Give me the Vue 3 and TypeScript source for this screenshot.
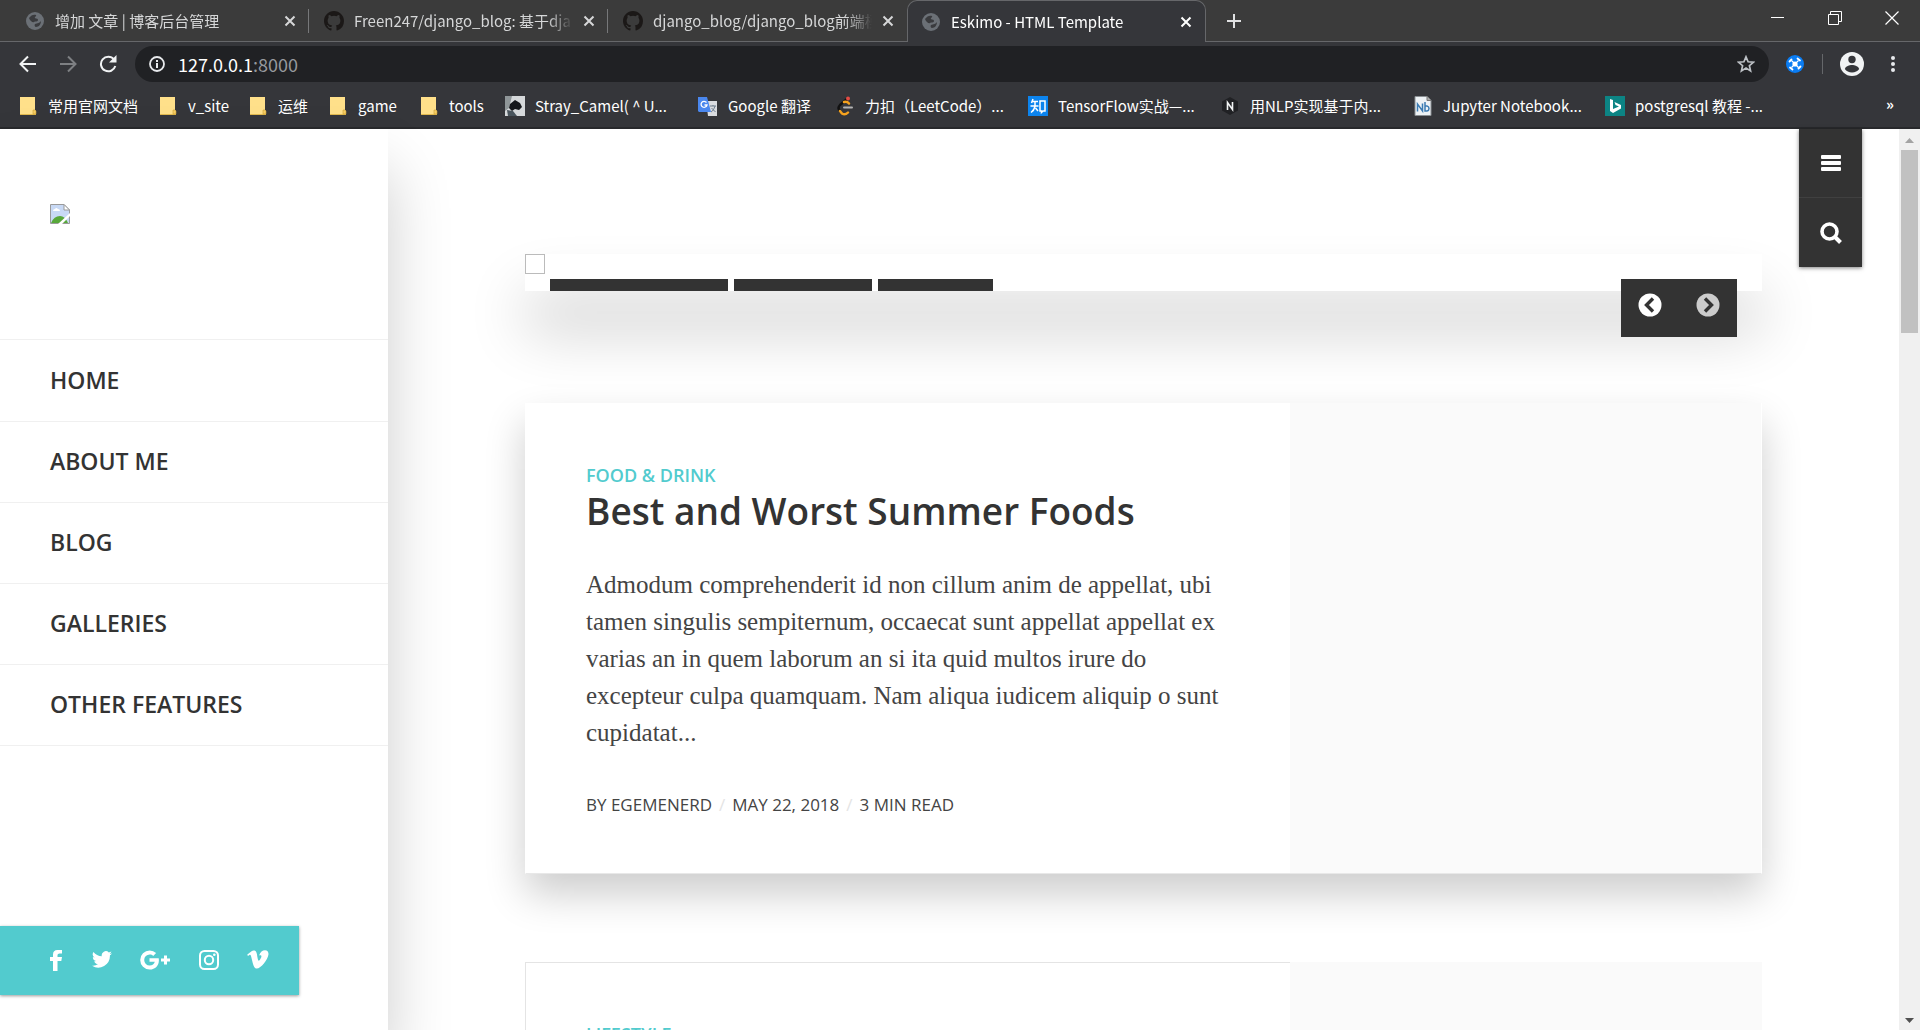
<script setup lang="ts">
interface Tab { title: string; icon: 'globe' | 'github'; active?: boolean }
interface Bookmark { label: string; icon: string; width: number }

const tabs: Tab[] = [
  { title: '增加 文章 | 博客后台管理', icon: 'globe' },
  { title: 'Freen247/django_blog: 基于dja', icon: 'github' },
  { title: 'django_blog/django_blog前端模', icon: 'github' },
  { title: 'Eskimo - HTML Template', icon: 'globe', active: true },
]

const bookmarks: Bookmark[] = [
  { label: '常用官网文档', icon: 'folder', width: 140 },
  { label: 'v_site', icon: 'folder', width: 90 },
  { label: '运维', icon: 'folder', width: 80 },
  { label: 'game', icon: 'folder', width: 91 },
  { label: 'tools', icon: 'folder', width: 86 },
  { label: 'Stray_Camel( ^ U...', icon: 'camel', width: 193 },
  { label: 'Google 翻译', icon: 'translate', width: 137 },
  { label: '力扣（LeetCode）...', icon: 'leetcode', width: 193 },
  { label: 'TensorFlow实战—...', icon: 'zhihu', width: 192 },
  { label: '用NLP实现基于内...', icon: 'hex', width: 193 },
  { label: 'Jupyter Notebook...', icon: 'notebook', width: 192 },
  { label: 'postgresql 教程 -...', icon: 'bing', width: 170 },
]

const menu = ['Home', 'About me', 'Blog', 'Galleries', 'Other features']
const slideTabs = [178, 138, 115]
const meta = ['By Egemenerd', 'May 22, 2018', '3 min read']
</script>

<template>
  <div class="window">
    <header class="chrome">
      <div class="tabstrip">
        <div v-for="(tab, i) in tabs" :key="i" class="tab" :class="{ active: tab.active, divided: i < 2 }">
          <svg v-if="tab.icon === 'globe'" class="favicon" viewBox="0 0 20 20" aria-hidden="true">
            <circle cx="10" cy="10" r="9" fill="#6b7076" />
            <path d="M4 7c2-3 5-4 7-3 1 1-2 2-1 3s3 0 3 2-3 1-4 2-4-1-5-4zM10 13c2-1 5-1 6-3 0 3-2 6-5 6-1 0-2-2-1-3z" fill="#3a3b3e" />
          </svg>
          <svg v-else class="favicon" viewBox="0 0 16 16" aria-hidden="true">
            <path fill="#1b1817" d="M8 0C3.58 0 0 3.58 0 8c0 3.54 2.29 6.53 5.47 7.59.4.07.55-.17.55-.38 0-.19-.01-.82-.01-1.49-2.01.37-2.53-.49-2.69-.94-.09-.23-.48-.94-.82-1.13-.28-.15-.68-.52-.01-.53.63-.01 1.08.58 1.23.82.72 1.21 1.87.87 2.33.66.07-.52.28-.87.51-1.07-1.78-.2-3.64-.89-3.64-3.95 0-.87.31-1.59.82-2.15-.08-.2-.36-1.02.08-2.12 0 0 .67-.21 2.2.82a7.6 7.6 0 0 1 4 0c1.53-1.04 2.2-.82 2.2-.82.44 1.1.16 1.92.08 2.12.51.56.82 1.27.82 2.15 0 3.07-1.87 3.75-3.65 3.95.29.25.54.73.54 1.48 0 1.07-.01 1.93-.01 2.2 0 .21.15.46.55.38A8 8 0 0 0 16 8c0-4.42-3.58-8-8-8z" />
          </svg>
          <span class="tab-title">{{ tab.title }}</span>
          <button class="tab-close" aria-label="Close tab">
            <svg viewBox="0 0 12 12" width="12" height="12"><path d="M1.500 1.500l9 9M10.500 1.500l-9 9" stroke="currentColor" stroke-width="2" /></svg>
          </button>
        </div>
        <button class="new-tab" aria-label="New tab">
          <svg viewBox="0 0 16 16" width="16" height="16"><path d="M8 1v14M1 8h14" stroke="currentColor" stroke-width="2" /></svg>
        </button>
        <div class="controls">
          <button aria-label="Minimize"><svg viewBox="0 0 14 14" width="14" height="14"><path d="M0 6.500h13" stroke="#fff" /></svg></button>
          <button aria-label="Restore"><svg viewBox="0 0 14 14" width="14" height="14" fill="none" stroke="#fff"><path d="M.5 3.500h10v10H.5zM2.500 3.500v-3h11v10h-3" /></svg></button>
          <button aria-label="Close"><svg viewBox="0 0 14 14" width="14" height="14"><path d="M.5.5l13 13M13.500.5l-13 13" stroke="#fff" stroke-width="1.200" /></svg></button>
        </div>
      </div>

      <div class="toolbar">
        <button class="tool" aria-label="Back"><svg viewBox="0 0 18 18" width="18" height="18" fill="none" stroke="#f1f3f4" stroke-width="2"><path d="M17 9H2M9 1.500L1.500 9 9 16.500" /></svg></button>
        <button class="tool" aria-label="Forward"><svg viewBox="0 0 18 18" width="18" height="18" fill="none" stroke="#7e8083" stroke-width="2"><path d="M1 9h15M9 1.500L16.500 9 9 16.500" /></svg></button>
        <button class="tool" aria-label="Reload"><svg viewBox="0 0 18 18" width="18" height="18"><path d="M15 4.500A7.300 7.300 0 1 0 16.300 11" fill="none" stroke="#f1f3f4" stroke-width="2" /><path d="M17.500 0v7.500H10z" fill="#f1f3f4" /></svg></button>
        <div class="omnibox">
          <svg viewBox="0 0 16 16" width="16" height="16"><circle cx="8" cy="8" r="7" fill="none" stroke="#e8eaed" stroke-width="1.800" /><path d="M8 7v5M8 4v2" stroke="#e8eaed" stroke-width="2" /></svg>
          <span class="url">127.0.0.1<span class="port">:8000</span></span>
          <svg viewBox="0 0 18 18" width="18" height="18"><path d="M9 1.800l2.100 5 5.300.4-4 3.500 1.200 5.200L9 13.100l-4.600 2.800 1.200-5.200-4-3.500 5.300-.4z" fill="none" stroke="#bdc1c6" stroke-width="1.700" /></svg>
        </div>
        <button class="tool extension" aria-label="Extension">
          <svg viewBox="0 0 18 18" width="18" height="18"><circle cx="9" cy="9" r="9" fill="#0a7cf2" /><circle cx="9" cy="9" r="2.600" fill="#fff" /><path d="M5.500 5.500l7 7M12.500 5.500l-7 7" stroke="#fff" stroke-width="1.200" /><path d="M3.500 6.500l2-2M11.500 3.500l2.500 2M14.500 11.500l-2 2M6.500 14.500L4 12.500" stroke="#fff" stroke-width="1.800" stroke-linecap="round" /></svg>
        </button>
        <span class="tool-divider"></span>
        <button class="tool avatar" aria-label="Profile">
          <svg viewBox="0 0 24 24" width="24" height="24"><circle cx="12" cy="12" r="12" fill="#f1f3f4" /><circle cx="12" cy="7.500" r="3.700" fill="#35363a" /><path d="M4.800 17c1-3 4.500-4 7.200-4s6.200 1 7.200 4c-1.500 2.200-4.200 3.500-7.200 3.500S6.300 19.200 4.800 17z" fill="#35363a" /></svg>
        </button>
        <button class="tool more" aria-label="Menu"><svg viewBox="0 0 4 16" width="4" height="16" fill="#e8eaed"><circle cx="2" cy="2" r="2" /><circle cx="2" cy="8" r="2" /><circle cx="2" cy="14" r="2" /></svg></button>
      </div>

      <nav class="bookmarks">
        <a v-for="mark in bookmarks" :key="mark.label" href="#" class="bookmark" :style="{ width: mark.width + 'px' }">
          <svg viewBox="0 0 20 20" width="20" height="20" aria-hidden="true">
            <g v-if="mark.icon === 'folder'"><path d="M2 1h15v13l1 1v4H2z" fill="#ffe08a" /><path d="M2 18h16v1H2z" fill="#e0b84e" /><path d="M15 18v-4h2l1 1v3z" fill="#f7cd63" stroke="#c99f38" stroke-width=".6" /></g>
            <g v-else-if="mark.icon === 'camel'"><path d="M0 0h20v20H0z" fill="#d5d8da" /><path d="M0 0h7l-3 12-4 3z" fill="#8f9698" /><path d="M5 8l5-4 5 3 2 4-3 3-4-1-3 2-3-3z" fill="#15171b" /><path d="M2 14l6 1 4 5H3z" fill="#49545c" /></g>
            <g v-else-if="mark.icon === 'translate'"><path d="M8 5h11v15H10z" fill="#dadce0" /><path d="M0 1h9l4 15H1L0 15z" fill="#4a87ee" /><path d="M8.500 6.500A3 3 0 1 0 9 9H6.500" fill="none" stroke="#fff" stroke-width="1.300" /><path d="M12 10h6M15 9v1M17 10c-1 3-2 5-4 6M13.500 12l4 4" fill="none" stroke="#6c7c8c" /></g>
            <g v-else-if="mark.icon === 'leetcode'" fill="none" stroke-linecap="round"><path d="M12 3L5 9q-3 3 0 6" stroke="#111" stroke-width="2.400" /><path d="M5 15l2 2.500q3 2 6-1M9 6q3-1 5 1.500" stroke="#f5a21e" stroke-width="2.400" /><path d="M9 11.500h8" stroke="#b3b3b3" stroke-width="2" /><circle cx="13" cy="2.500" r="2" fill="#e34b43" /></g>
            <g v-else-if="mark.icon === 'zhihu'"><path d="M0 0h20v20H0z" fill="#0c84ee" /><path d="M5 3L3.500 7M4.500 5.500H10M2.500 10h8M7 5.500v5q-1 4-4 6M7.500 12l2.500 3M12 5h5v10h-2l-1.500 1.500V15H12z" fill="none" stroke="#fff" stroke-width="1.500" /></g>
            <g v-else-if="mark.icon === 'hex'"><path d="M10 1l8 4.500v9L10 19l-8-4.500v-9z" fill="#202124" /><path d="M7.500 14V6.500l5 7V6" fill="none" stroke="#f1f3f4" stroke-width="1.600" /></g>
            <g v-else-if="mark.icon === 'notebook'"><path d="M2 .5h12l4 4v15H2z" fill="#edf2f5" stroke="#8a8f93" /><path d="M14 .5v4h4" fill="#aaa" stroke="#777" /><path d="M4.500 15.500V8l5 7V7.500M12 6v9h2q2-.5 2-2.500t-2-2.500h-2" fill="none" stroke="#3b7bb3" stroke-width="1.500" /></g>
            <g v-else><path d="M0 0h20v20H0z" fill="#0c8484" /><path d="M5 3l3 1v9l6-2.500-3.500-1.500-1-3L16 9v3.500L8 17l-3-2z" fill="#fff" /></g>
          </svg>
          <span>{{ mark.label }}</span>
        </a>
        <button class="overflow" aria-label="More bookmarks">»</button>
      </nav>
    </header>

    <div class="page">
      <aside class="sidebar">
        <a href="#" class="brand" aria-label="Eskimo">
          <svg viewBox="0 0 20 20" width="20" height="20"><path d="M.5.5h13.500l5.500 5.500v13.500H.5z" fill="#c8d9f5" stroke="#9a9a9a" /><path d="M14 .5V6h5.500z" fill="#fff" stroke="#9a9a9a" /><path d="M3 7q0-2 2-2 1-2 3 0 2 0 2 2z" fill="#fff" /><path d="M1 19q3-7 9-7 5 0 8 7z" fill="#58a83a" /><path d="M8 20L20 9v3l-8 8z" fill="#fff" /></svg>
        </a>
        <nav class="menu">
          <a v-for="item in menu" :key="item" href="#">{{ item }}</a>
        </nav>
        <div class="social">
          <a href="#" aria-label="Facebook"><svg viewBox="0 0 14 22" width="14" height="22"><path d="M4 22V12H1V8h3V5.500Q4 1 8.500 1H13v3.500h-2.500Q8.500 4.500 8.500 6v2H13l-.7 4H8.500v10z" /></svg></a>
          <a href="#" aria-label="Twitter"><svg viewBox="0 0 24 20" width="20" height="17"><path d="M24 2.400a10 10 0 0 1-2.800.8A5 5 0 0 0 23.300.5a10 10 0 0 1-3.100 1.200 4.900 4.900 0 0 0-8.400 4.500A14 14 0 0 1 1.700 1a4.900 4.900 0 0 0 1.500 6.600A5 5 0 0 1 1 7v.1a4.900 4.900 0 0 0 3.900 4.800 5 5 0 0 1-2.200.1 4.900 4.900 0 0 0 4.600 3.400A9.900 9.900 0 0 1 0 17.500 14 14 0 0 0 21.500 5A10 10 0 0 0 24 2.400z" /></svg></a>
          <a href="#" aria-label="Google Plus"><svg viewBox="0 0 30 20" width="30" height="20"><path d="M9.500 8.300v3.500h5.300c-.6 2.300-2.400 3.700-5.100 3.700a5.500 5.500 0 0 1 0-11c1.400 0 2.600.5 3.500 1.400l2.900-2.800A9.300 9.300 0 0 0 9.700.5a9.500 9.500 0 0 0 0 19c5.500 0 9.200-3.800 9.200-9.300 0-.7-.1-1.300-.2-1.900zM24 5.500v3h-3v3h3v3h3v-3h3v-3h-3v-3z" /></svg></a>
          <a href="#" aria-label="Instagram"><svg viewBox="0 0 20 20" width="20" height="20"><rect x="1" y="1" width="18" height="18" rx="4.500" fill="none" stroke="#fff" stroke-width="2" /><circle cx="10" cy="10" r="4.200" fill="none" stroke="#fff" stroke-width="2" /><circle cx="15.300" cy="4.800" r="1.300" /></svg></a>
          <a href="#" aria-label="Vimeo"><svg viewBox="0 0 22 19" width="22" height="19"><path d="M1 6L.2 4.800C2 3.200 4.500.6 6.500.4c2.200-.2 3 1.500 3.400 3.600.5 2.700.9 6.700 1.900 6.700.8 0 2.500-3 2.600-4.200.1-1.500-1-1.500-2.300-1C13.200 2 15.500.3 18 .3c2.700 0 3.800 2 3.400 4.500C20.700 9.500 14 18.600 9.700 18.600 6.500 18.600 5.600 12 4.500 8 4 6 3.700 4.800 3 4.800c-.5 0-1.200.6-2 1.200z" /></svg></a>
        </div>
      </aside>

      <main class="content">
        <section class="slider">
          <span class="slide-image"></span>
          <div class="slide-tabs">
            <span v-for="width in slideTabs" :key="width" :style="{ width: width + 'px' }"></span>
          </div>
          <div class="slider-nav">
            <button aria-label="Previous"><svg viewBox="0 0 24 24" width="24" height="24"><circle cx="12" cy="12" r="11.500" fill="#fff" /><path d="M15 5.500L8.500 12l6.500 6.500" fill="none" stroke="#333" stroke-width="3.400" /></svg></button>
            <button aria-label="Next"><svg viewBox="0 0 24 24" width="24" height="24"><circle cx="12" cy="12" r="11.500" fill="#ccc" /><path d="M9 5.500l6.500 6.500L9 18.500" fill="none" stroke="#333" stroke-width="3.400" /></svg></button>
          </div>
        </section>

        <article class="card raised">
          <div class="card-body">
            <a href="#" class="category">Food &amp; Drink</a>
            <h2>Best and Worst Summer Foods</h2>
            <p>Admodum comprehenderit id non cillum anim de appellat, ubi tamen singulis sempiternum, occaecat sunt appellat appellat ex varias an in quem laborum an si ita quid multos irure do excepteur culpa quamquam. Nam aliqua iudicem aliquip o sunt cupidatat...</p>
            <ul class="meta">
              <li v-for="item in meta" :key="item">{{ item }}</li>
            </ul>
          </div>
          <div class="card-image"></div>
        </article>

        <article class="card">
          <div class="card-body">
            <a href="#" class="category">Lifestyle</a>
          </div>
          <div class="card-image"></div>
        </article>
      </main>

      <div class="quick">
        <button aria-label="Menu"><svg viewBox="0 0 22 18" width="22" height="18" fill="#fff"><rect x="1" y="1" width="20" height="4" rx="1" /><rect x="1" y="7" width="20" height="4" rx="1" /><rect x="1" y="13" width="20" height="4" rx="1" /></svg></button>
        <button aria-label="Search"><svg viewBox="0 0 22 22" width="22" height="22" fill="none" stroke="#fff"><circle cx="9.500" cy="9.500" r="7.500" stroke-width="3.600" /><path d="M15 15l5.500 5.500" stroke-width="4" /></svg></button>
      </div>

      <div class="scrollbar" aria-hidden="true">
        <svg viewBox="0 0 21 21" width="21" height="21"><path d="M6 14l4.500-5 4.500 5z" fill="#a3a3a3" /></svg>
        <span class="thumb"></span>
        <svg viewBox="0 0 21 21" width="21" height="21"><path d="M6 9h9l-4.500 5z" fill="#505050" /></svg>
      </div>
    </div>
  </div>
</template>

<style>
body {
  margin: 0;
}
</style>

<style scoped>
.window {
  height: 100vh;
  display: flex;
  flex-direction: column;
  overflow: hidden;
  background: #fff;
  font-family: "Open Sans", "Noto Sans CJK SC", sans-serif;
}
button {
  padding: 0;
  border: 0;
  background: none;
  color: inherit;
  font: inherit;
  display: flex;
  align-items: center;
  justify-content: center;
}
a {
  color: inherit;
  text-decoration: none;
}
svg {
  display: block;
  flex: none;
}

/* browser frame */
.chrome {
  flex: none;
  background: #35363a;
  border-bottom: 2px solid #28292c;
  color: #fff;
  font-family: "Noto Sans CJK SC", sans-serif;
  font-size: 15px;
}
.tabstrip {
  display: flex;
  height: 41px;
  padding-left: 10px;
  background: #3b3b3b;
  border-bottom: 1px solid #66676a;
}
.tab {
  flex: 0 1 299px;
  box-sizing: border-box;
  display: flex;
  align-items: center;
  padding: 0 13px 0 15px;
  gap: 10px;
  min-width: 0;
  color: #d6d7d8;
}
.tab.divided {
  background: linear-gradient(#77787a, #77787a) right center / 1px 24px no-repeat;
}
.tab.active {
  height: 42px;
  padding: 0 13px;
  background: #35363a;
  border: 1px solid #66676a;
  border-bottom: 0;
  border-radius: 10px 10px 0 0;
  color: #fff;
}
.favicon {
  width: 20px;
  height: 20px;
}
.tab-title {
  flex: 1;
  overflow: hidden;
  white-space: nowrap;
  line-height: 24px;
  mask-image: linear-gradient(90deg, #000 88%, transparent);
}
.tab-close {
  width: 12px;
  height: 20px;
}
.new-tab {
  width: 56px;
  color: #e0e1e2;
}
.controls {
  display: flex;
  height: 36px;
  margin-left: auto;
}
.controls button {
  width: 57px;
}
.toolbar {
  display: flex;
  align-items: center;
  height: 44px;
  padding: 0 8px;
}
.tool {
  width: 40px;
  height: 36px;
}
.omnibox {
  flex: 1;
  display: flex;
  align-items: center;
  height: 36px;
  box-sizing: border-box;
  margin: 0 6px 0 7px;
  padding: 0 14px;
  border-radius: 18px;
  background: #202124;
}
.url {
  flex: 1;
  padding-left: 13px;
  font-size: 18px;
  line-height: 24px;
}
.port {
  color: #96999d;
}
.tool-divider {
  width: 1px;
  height: 20px;
  margin: 0 7px;
  background: #65676a;
}
.avatar {
  width: 44px;
}
.more {
  width: 38px;
}
.bookmarks {
  display: flex;
  align-items: center;
  height: 39px;
  padding: 0 18px 2px;
}
.bookmark {
  flex: none;
  display: flex;
  align-items: center;
  gap: 10px;
  white-space: nowrap;
}
.bookmark span {
  line-height: 24px;
}
.overflow {
  margin-left: auto;
  width: 24px;
  padding-bottom: 4px;
  font-weight: 700;
}

/* site */
.page {
  flex: 1;
  display: flex;
  min-height: 0;
  position: relative;
  color: #333;
}
.sidebar {
  flex: 0 0 388px;
  display: flex;
  flex-direction: column;
  background: #fff;
  box-shadow: 0 40px 60px rgba(0, 0, 0, 0.2);
}
.brand {
  height: 135px;
  padding: 75px 50px 0;
}
.menu {
  border-top: 1px solid #f0f0f0;
}
.menu a {
  display: block;
  padding: 20px 50px 21px;
  border-bottom: 1px solid #f0f0f0;
  font-size: 23px;
  font-weight: 600;
  line-height: 40px;
  text-transform: uppercase;
}
.menu a + a {
  padding-top: 19px;
}
.social {
  align-self: flex-start;
  display: flex;
  align-items: center;
  justify-content: space-between;
  width: 299px;
  height: 69px;
  box-sizing: border-box;
  margin: auto 0 35px;
  padding: 0 30px 2px 49px;
  background: #52cbce;
  box-shadow: 0 1px 3px rgba(0, 0, 0, 0.4);
  fill: #fff;
}
.content {
  flex: 1;
  min-width: 0;
  padding: 125px 137px 0;
}
.slider {
  position: relative;
  display: flex;
  flex-direction: column;
  justify-content: space-between;
  height: 37px;
  background: #fff;
  box-shadow: 0 40px 60px rgba(0, 0, 0, 0.2);
}
.slide-image {
  width: 18px;
  height: 18px;
  border: 1px solid #bbb;
}
.slide-tabs {
  display: flex;
  gap: 6px;
  padding-left: 25px;
}
.slide-tabs span {
  height: 12px;
  background: #333;
}
.slider-nav {
  position: absolute;
  top: 25px;
  right: 25px;
  display: flex;
  background: #333;
}
.slider-nav button {
  width: 58px;
  height: 58px;
  padding-bottom: 6px;
}
.card {
  position: relative;
  display: grid;
  grid-template-columns: 1.618fr 1fr;
  height: 470px;
  margin-top: 88px;
  background: #fafafa;
}
.card.raised {
  margin-top: 112px;
  height: auto;
  border-radius: 2px;
  box-shadow: 0 20px 40px rgba(0, 0, 0, 0.2);
}
.card-body {
  box-sizing: border-box;
  padding: 58px 60px;
  background: #fff;
  border: 1px solid #e4e4e4;
  border-right: 0;
}
.raised .card-body {
  border-color: #fff;
  border-bottom-color: #e8e8e8;
  padding-bottom: 54px;
}
.card-image {
  background: #fafafa;
}
.raised .card-image {
  border-bottom: 1px solid #e8e8e8;
  border-right: 1px solid #fff;
}
.category {
  display: block;
  color: #52cbce;
  font-size: 18px;
  font-weight: 600;
  line-height: 26px;
  text-transform: uppercase;
}
h2 {
  margin: 0 0 32px;
  font-size: 37px;
  font-weight: 600;
  line-height: 46px;
}
p {
  margin: 0 0 40px;
  font-family: "Liberation Serif", serif;
  font-size: 25px;
  line-height: 37px;
  color: #444;
}
.meta {
  display: flex;
  margin: 0;
  padding: 0;
  list-style: none;
  font-size: 17px;
  line-height: 28px;
  text-transform: uppercase;
  color: #444;
}
.meta li + li::before {
  content: "/";
  padding: 0 7px;
  color: #e4e4e4;
}
.quick {
  position: absolute;
  top: 0;
  right: 58px;
  width: 63px;
  background: #333;
  box-shadow: 0 1px 4px rgba(0, 0, 0, 0.5);
}
.quick button {
  width: 100%;
  height: 69px;
}
.quick button:first-child {
  border-bottom: 1px solid #404040;
}
.scrollbar {
  flex: 0 0 21px;
  display: flex;
  flex-direction: column;
  background: #f0f0f0;
}
.thumb {
  width: 17px;
  height: 183px;
  margin: 0 2px auto;
  background: #c1c1c1;
}
</style>
